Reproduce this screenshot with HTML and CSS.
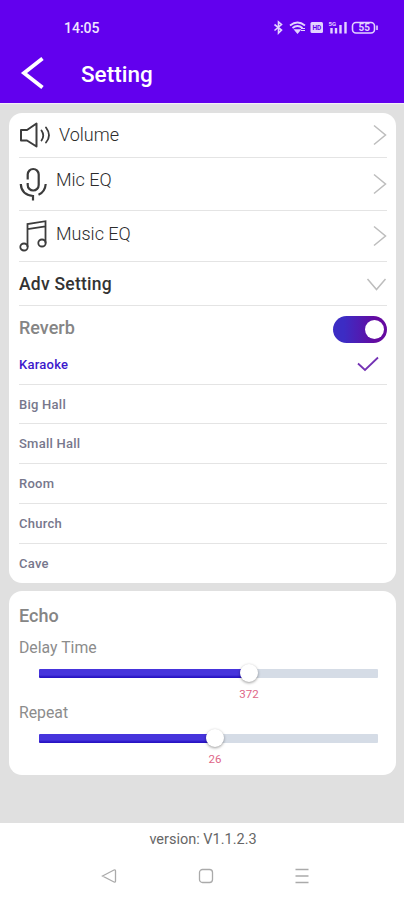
FILE: index.html
```html
<!DOCTYPE html>
<html lang="en">
<head>
<meta charset="utf-8">
<meta name="viewport" content="width=device-width">
<title>Setting</title>
<link rel="stylesheet" href="styles.css">
</head>
<body>
<header class="header">
  <div class="status">
    <span class="clock">14:05</span>
    <svg class="status-icons" width="106" height="18" viewBox="0 0 106 18" fill="none" stroke="#e3d3ff" stroke-width="1.4">
      <path d="M1.500 6.500l7 5.500-3 3V4l3 2.500-7 6" stroke-width="1.600"/>
      <path d="M17 7.500q7.500-6 15 0M19.500 10q5-4 10 0" stroke-width="1.800"/>
      <path d="M22 12h5l-2.500 3z" fill="#e3d3ff"/>
      <path d="M28 10.500h4M28 12.500h4" stroke-width="1"/>
      <rect x="37.500" y="4" width="12.500" height="11" rx="1.500" fill="#e3d3ff" stroke="none"/>
      <text x="39.500" y="12.300" class="hd">HD</text>
      <text x="55.500" y="8" class="net">5G</text>
      <path d="M58.500 10v5.500M63 10v5.500M67.500 7V15.500M72.500 4v11.500" stroke-width="2.400"/>
      <rect x="79.500" y="4.500" width="22" height="10.500" rx="3.500" stroke-width="1.600"/>
      <path d="M104 7.500v4.500" stroke-width="1.600"/>
      <text x="85.500" y="13.200" class="battery">55</text>
    </svg>
  </div>
  <div class="titlebar">
    <svg class="back" width="26" height="36" viewBox="0 0 26 36" fill="none" stroke="#fff" stroke-width="3.800"><path d="M22.500 3.500L4 18l18.500 14.500"/></svg>
    <h1 class="title">Setting</h1>
  </div>
</header>
<main class="main">
  <section class="card">
    <div class="row row-volume">
      <svg width="33" height="26" viewBox="0 0 33 26" fill="none" stroke="#3c3c3c" stroke-width="1.800" stroke-linejoin="round">
        <path d="M2 8h6l9.500-6.500v23L8 18.500H2z" stroke-width="2"/>
        <path d="M22.500 8.500q3.500 5 0 10M27 5.500q6 8 0 15" stroke-linecap="round"/>
      </svg>
      <span class="item item-volume">Volume</span>
      <svg class="chev" width="14" height="22" viewBox="0 0 14 22"><path d="M1 1.500l11.500 9.500L1 20.500"/></svg>
    </div>
    <div class="row row-mic">
      <svg width="28" height="35" viewBox="0 0 28 35" fill="none" stroke="#3c3c3c" stroke-width="2.200">
        <path d="M8.700 12.500V7.500a5.500 5.500 0 0 1 11 0V18a5.500 5.500 0 0 1-11 0v-2"/>
        <path d="M1.800 17q.4 10.500 12.200 12v4.500M26.700 17q-.6 8-7.200 10.800"/>
      </svg>
      <span class="item item-mic">Mic EQ</span>
      <svg class="chev" width="14" height="22" viewBox="0 0 14 22"><path d="M1 1.500l11.500 9.500L1 20.500"/></svg>
    </div>
    <div class="row row-music">
      <svg width="28" height="32" viewBox="0 0 28 32" fill="none" stroke="#3c3c3c" stroke-width="1.800">
        <path d="M8.500 27V4L26.500 1.200v22M8.500 9.200l18-2.800"/>
        <ellipse cx="5" cy="27" rx="3.700" ry="3.500"/><ellipse cx="23" cy="23" rx="3.700" ry="3.500"/>
      </svg>
      <span class="item item-music">Music EQ</span>
      <svg class="chev" width="14" height="22" viewBox="0 0 14 22"><path d="M1 1.500l11.500 9.500L1 20.500"/></svg>
    </div>
    <div class="row row-adv">
      <span class="adv">Adv Setting</span>
      <svg class="chev chev-down" width="21" height="13" viewBox="0 0 21 13"><path d="M1.500 1l9 10.500L19.500 1"/></svg>
    </div>
    <div class="row row-reverb">
      <span class="heading reverb">Reverb</span>
      <span class="switch"><span class="knob"></span></span>
    </div>
    <div class="row row-selected">
      <span class="option selected">Karaoke</span>
      <svg class="check" width="22" height="16" viewBox="0 0 22 16" fill="none" stroke="#7432b4" stroke-width="1.800"><path d="M1 7.500l7 6.500L21 1.500"/></svg>
    </div>
    <div class="row row-option"><span class="option big-hall">Big Hall</span></div>
    <div class="row row-option tall"><span class="option small-hall">Small Hall</span></div>
    <div class="row row-option tall"><span class="option room">Room</span></div>
    <div class="row row-option tall"><span class="option church">Church</span></div>
    <div class="row row-option last"><span class="option cave">Cave</span></div>
  </section>
  <section class="card echo">
    <h2 class="heading echo-title">Echo</h2>
    <div class="label delay">Delay Time</div>
    <div class="slider" style="--value: 210px"><div class="track"></div><span class="thumb"></span><span class="value">372</span></div>
    <div class="label repeat">Repeat</div>
    <div class="slider" style="--value: 176px"><div class="track"></div><span class="thumb"></span><span class="value">26</span></div>
  </section>
</main>
<footer class="footer">
  <div class="version">version: V1.1.2.3</div>
  <nav class="nav">
    <svg width="16" height="16" viewBox="0 0 16 16"><path d="M1.500 8L13 2q1.500-.5 1.500 1v10q0 1.500-1.500 1z"/></svg>
    <svg width="16" height="16" viewBox="0 0 16 16"><rect x="1.500" y="1.500" width="13" height="13" rx="3"/></svg>
    <svg width="16" height="16" viewBox="0 0 16 16"><path d="M1.500 1.500h13M1.500 8h13M1.500 14.500h13"/></svg>
  </nav>
</footer>
</body>
</html>
```
FILE: styles.css
```css
* { box-sizing: border-box; }
body { margin: 0; width: 404px; height: 900px; overflow: hidden; display: flex; flex-direction: column; background: #e0e0e0; font-family: Roboto, sans-serif; }
svg { display: block; flex: none; }
span, h1, h2 { white-space: nowrap; }
.header { height: 103px; background: #6200ee; color: #fff; box-shadow: 0 1px 1px #f3edf9; flex: none; }
.status { height: 46px; padding: 18px 25px 0 64px; display: flex; justify-content: space-between; }
.clock { font-size: 14px; font-weight: 500; line-height: 20px; color: #f0e6ff; }
.status-icons text { stroke: none; fill: #e3d3ff; font-weight: 700; }
.status-icons .hd { font-size: 6.500px; fill: #6200ee; }
.status-icons .net { font-size: 6px; }
.status-icons .battery { font-size: 10px; }
.titlebar { display: flex; align-items: center; height: 54px; padding-left: 20px; }
.title { margin: 0 0 0 35px; padding-top: 1px; font-size: 22.500px; font-weight: 500; line-height: 28px; }
.main { flex: none; height: 720px; padding: 10px 8px 0 9px; }
.card { background: #fff; border-radius: 13px; height: 470px; padding: 0 9px 0 10px; overflow: hidden; }
.row { display: flex; align-items: center; border-bottom: 1px solid #e4e4e4; }
.row > :last-child:not(:first-child) { margin-left: auto; }
.row-volume { height: 45px; }
.row-mic { height: 53px; }
.row-music { height: 51px; }
.row-adv { height: 44px; padding-top: 1px; }
.row-reverb { height: 46px; border: 0; }
.row-selected { height: 33px; padding-right: 8px; padding-bottom: 7px; }
.row-option { height: 39px; }
.tall { height: 40px; }
.last { border: 0; }
.item { font-size: 18px; font-weight: 300; line-height: 22px; color: #2c2c2c; }
.item-volume { margin-left: 7px; }
.item-mic, .item-music { margin-left: 9px; padding-bottom: 8px; }
.item-music { padding-bottom: 5px; }
.chev { fill: none; stroke: #bdbdbd; stroke-width: 1.500; }
.adv { font-size: 17.500px; font-weight: 500; letter-spacing: .25px; color: #333; }
.heading { margin: 0; font-size: 18px; line-height: 22px; font-weight: 500; color: #858585; }
.reverb { padding-bottom: 2px; }
.switch { width: 54px; height: 27px; border-radius: 14px; background: linear-gradient(90deg, #3c2cc4 20%, #650aa0 80%); display: flex; justify-content: flex-end; align-items: center; padding-right: 3px; }
.knob { width: 19px; height: 19px; border-radius: 50%; background: #fff; }
.option { font-size: 13px; font-weight: 500; letter-spacing: .25px; color: #77778c; }
.selected { color: #3c18cc; }
.check { position: relative; top: -1px; }
.echo { margin-top: 8px; height: 184px; padding-top: 14px; }
.label { font-size: 15.800px; line-height: 20px; color: #8c8c8c; }
.delay { margin-top: 11px; }
.repeat { margin-top: 3px; }
.slider { position: relative; height: 42px; padding: 11px 9px 0 20px; }
.track { height: 9px; border-radius: 1px; background: linear-gradient(#4634dc 0 6px, #2814c4 8px) 0 0 / var(--value) 100% no-repeat #d5dce6; }
.thumb { position: absolute; left: calc(20px + var(--value)); top: 6px; width: 18px; height: 18px; margin-left: -9px; border-radius: 50%; background: #fff; box-shadow: 0 1px 3px rgba(0, 0, 0, .4); }
.value { position: absolute; left: calc(20px + var(--value)); top: 29px; transform: translateX(-50%); font-size: 11.500px; line-height: 14px; color: #de6688; }
.footer { flex: 1; background: #fff; padding-top: 7px; }
.version { text-align: center; font-size: 14.500px; line-height: 20px; color: #666; padding-left: 2px; }
.nav { display: flex; justify-content: space-between; padding: 18px 94px 0 101px; }
.nav svg { fill: none; stroke: #aaa; stroke-width: 1.300; }
```
